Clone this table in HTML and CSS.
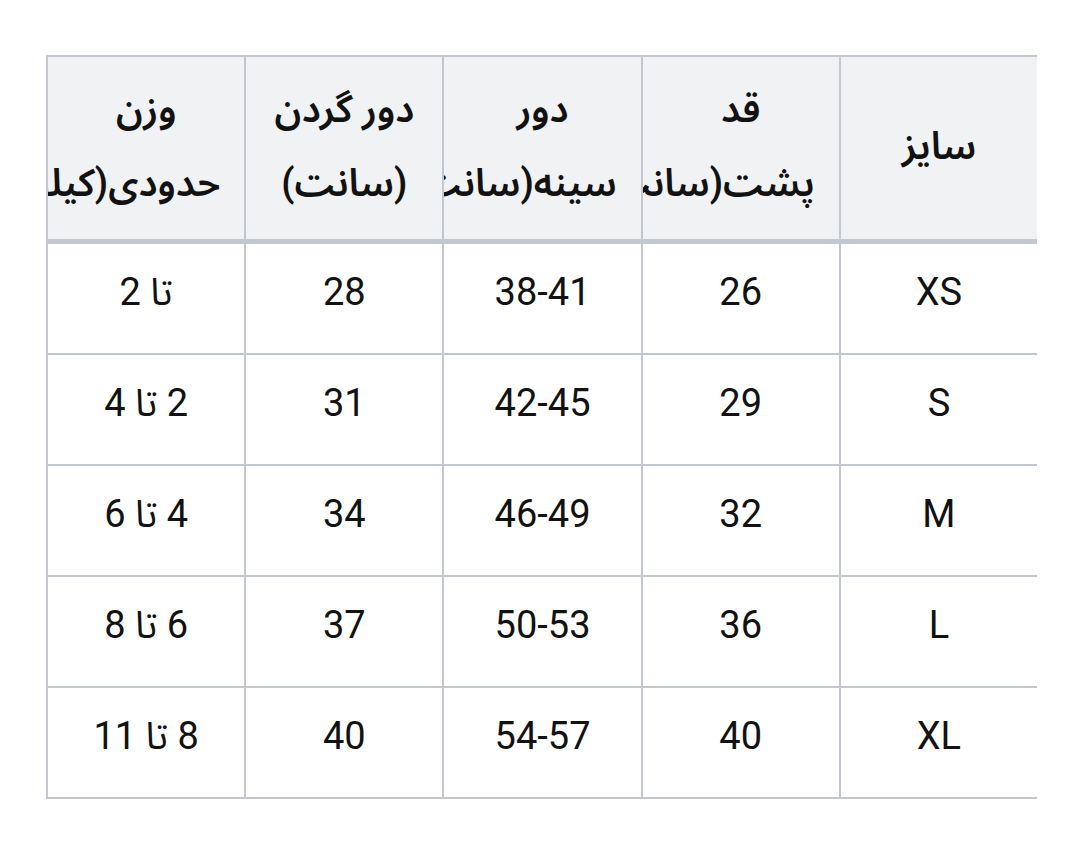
FILE: index.html
```html
<!DOCTYPE html>
<html lang="fa">
<head>
<meta charset="utf-8">
<link rel="stylesheet" href="styles.css">
</head>
<body>
<div class="wrap">
  <table class="size-table" dir="rtl">
    <thead>
      <tr>
        <th>سایز</th>
        <th>قد پشت(سانت)</th>
        <th>دور سینه(سانت)</th>
        <th>دور گردن (سانت)</th>
        <th>وزن حدودی(کیلوگرم)</th>
      </tr>
    </thead>
    <tbody>
      <tr><td>XS</td><td>26</td><td>38-41</td><td>28</td><td>تا 2</td></tr>
      <tr><td>S</td><td>29</td><td>42-45</td><td>31</td><td>2 تا 4</td></tr>
      <tr><td>M</td><td>32</td><td>46-49</td><td>34</td><td>4 تا 6</td></tr>
      <tr><td>L</td><td>36</td><td>50-53</td><td>37</td><td>6 تا 8</td></tr>
      <tr><td>XL</td><td>40</td><td>54-57</td><td>40</td><td>8 تا 11</td></tr>
    </tbody>
  </table>
</div>
</body>
</html>
```

FILE: styles.css
```css
html, body {
  margin: 0;
  padding: 0;
  background: #ffffff;
}

body {
  font-family: Roboto, "Noto Sans Arabic", "Vazirmatn", "DejaVu Sans", sans-serif;
  color: #121212;
}

.wrap {
  margin: 55px 0 0 46px;
  width: 991px;
  overflow: hidden;
}

.size-table {
  border-collapse: collapse;
  table-layout: fixed;
  width: 993px;
  font-size: 38px;
  line-height: 60px;
}

.size-table th,
.size-table td {
  border: 2px solid #c2c8ce;
  text-align: center;
  overflow: hidden;
}

.size-table th {
  background: #f1f2f4;
  font-weight: 600;
  line-height: 74px;
  padding: 15px 24px 19px;
  border-bottom: 5px solid #c2c8ce;
}

.size-table td {
  font-weight: 400;
  padding: 18px 24px 31px;
  height: 60px;
}
```
